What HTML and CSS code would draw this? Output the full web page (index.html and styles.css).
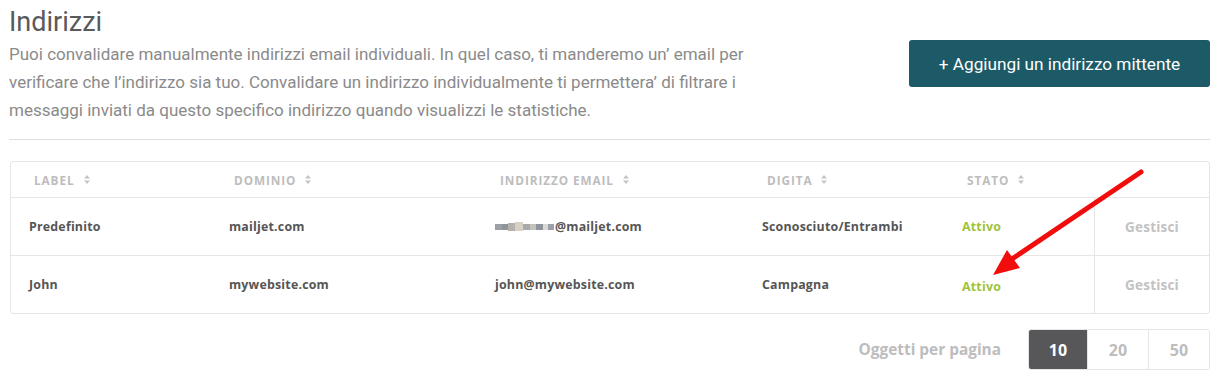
FILE: index.html
```html
<!DOCTYPE html>
<html lang="it">
<head>
<meta charset="utf-8">
<title>Indirizzi</title>
<link rel="stylesheet" href="styles.css">
</head>
<body>
<div class="page">
  <h1 class="title">Indirizzi</h1>
  <div class="intro">
    <p class="desc">Puoi convalidare manualmente indirizzi email individuali. In quel caso, ti manderemo un’ email per verificare che l’indirizzo sia tuo. Convalidare un indirizzo individualmente ti permettera’ di filtrare i messaggi inviati da questo specifico indirizzo quando visualizzi le statistiche.</p>
    <button class="add-btn">+ Aggiungi un indirizzo mittente</button>
  </div>
  <hr class="sep">
  <div class="table-wrap">
    <div class="table">
      <div class="row head">
        <div class="cell">LABEL <svg class="sort" viewBox="0 0 6 9"><path d="M3 0L6 3.5H0Z M3 9L0 5.5H6Z"/></svg></div>
        <div class="cell">DOMINIO <svg class="sort" viewBox="0 0 6 9"><path d="M3 0L6 3.5H0Z M3 9L0 5.5H6Z"/></svg></div>
        <div class="cell">INDIRIZZO EMAIL <svg class="sort" viewBox="0 0 6 9"><path d="M3 0L6 3.5H0Z M3 9L0 5.5H6Z"/></svg></div>
        <div class="cell">DIGITA <svg class="sort" viewBox="0 0 6 9"><path d="M3 0L6 3.5H0Z M3 9L0 5.5H6Z"/></svg></div>
        <div class="cell">STATO <svg class="sort" viewBox="0 0 6 9"><path d="M3 0L6 3.5H0Z M3 9L0 5.5H6Z"/></svg></div>
        <div class="cell"></div>
      </div>
      <div class="row">
        <div class="cell">Predefinito</div>
        <div class="cell">mailjet.com</div>
        <div class="cell"><span class="blur"><i class="b1"></i><i class="b2"></i><i class="b3"></i><i class="b4"></i><i class="b5"></i><i class="b6"></i><i class="b7"></i><i class="b8"></i><i class="b9"></i></span>@mailjet.com</div>
        <div class="cell">Sconosciuto/Entrambi</div>
        <div class="cell status">Attivo</div>
        <div class="cell action">Gestisci</div>
      </div>
      <div class="row">
        <div class="cell">John</div>
        <div class="cell">mywebsite.com</div>
        <div class="cell">john@mywebsite.com</div>
        <div class="cell">Campagna</div>
        <div class="cell status low">Attivo</div>
        <div class="cell action">Gestisci</div>
      </div>
    </div>
    <svg class="arrow" viewBox="0 0 170 120" width="170" height="120">
      <line x1="157" y1="10" x2="28" y2="97" stroke="#f20d0d" stroke-width="5" stroke-linecap="round"/>
      <path d="M9 113L23 88L36 106Z" fill="#f20d0d"/>
    </svg>
  </div>
  <div class="pager">
    <span class="pager-label">Oggetti per pagina</span>
    <div class="pager-group">
      <button class="pg active">10</button>
      <button class="pg">20</button>
      <button class="pg">50</button>
    </div>
  </div>
</div>
</body>
</html>
```
FILE: styles.css
```css
* { box-sizing: border-box; }
body {
  margin: 0;
  background: #fff;
  font-family: Roboto, "Liberation Sans", sans-serif;
}
.page {
  width: 1201px;
  margin-left: 9px;
  padding-top: 6px;
}
.title {
  margin: 0;
  font-family: Roboto, sans-serif;
  font-weight: 400;
  font-size: 27px;
  line-height: 32px;
  color: #5a5a5a;
}
.intro {
  display: flex;
  justify-content: space-between;
  align-items: flex-start;
}
.desc {
  margin: 2px 0 0 0;
  width: 765px;
  font-size: 17px;
  line-height: 28px;
  color: #8a8a8a;
}
.add-btn {
  margin-top: 2px;
  width: 301px;
  height: 47px;
  background: #1c5a67;
  border: none;
  border-radius: 3px;
  color: #fff;
  font-family: Roboto, sans-serif;
  font-size: 17.2px;
  padding: 0;
}
.sep {
  margin: 15px 0 0 0;
  border: none;
  border-top: 1px solid #dedede;
}
.table-wrap {
  position: relative;
  margin-top: 21px;
  margin-left: 1px;
}
.table {
  border: 1px solid #e6e6e6;
  border-radius: 3px;
  font-family: "Open Sans", sans-serif;
  font-weight: 700;
}
.row {
  display: grid;
  grid-template-columns: 200px 266px 267px 200px 150px 1fr;
  height: 58px;
  border-top: 1px solid #e6e6e6;
  align-items: stretch;
}
.row.head {
  height: 35px;
  border-top: none;
}
.cell {
  display: flex;
  align-items: center;
  padding-left: 18px;
  font-size: 12.4px;
  color: #555;
  letter-spacing: 0.2px;
}
.head .cell {
  padding-left: 23px;
  font-size: 11.8px;
  color: #bdbdbd;
  letter-spacing: 0.9px;
}
.sort {
  width: 6px;
  height: 9px;
  margin-left: 9px;
  fill: #c4c4c4;
}
.status { color: #9ec33b; }
.status.low { padding-top: 4px; }
.action {
  justify-content: center;
  padding-left: 0;
  font-size: 13.5px;
  color: #c2c2c2;
  border-left: 1px solid #e6e6e6;
}
.blur {
  display: inline-flex;
  align-items: center;
  margin-right: 1px;
}
.blur i {
  display: inline-block;
  width: 7px;
  height: 6px;
}
.blur .b1 { background: #9aa0a6; }
.blur .b2 { background: #8e949b; width: 6px; }
.blur .b3 { background: #b6b1aa; height: 8px; }
.blur .b4 { background: #d8d0c4; height: 9px; width: 8px; }
.blur .b5 { background: #a7a9ad; }
.blur .b6 { background: #c5c1bb; width: 6px; }
.blur .b7 { background: #8f959c; }
.blur .b8 { background: #d9d9d9; width: 5px; }
.blur .b9 { background: #9ba1a7; width: 6px; }
.arrow {
  position: absolute;
  left: 974px;
  top: 1px;
}
.pager {
  display: flex;
  justify-content: flex-end;
  align-items: center;
  gap: 27px;
  margin-top: 15px;
}
.pager-label {
  font-family: "Open Sans", sans-serif;
  font-weight: 700;
  font-size: 15.4px;
  color: #bdbdbd;
}
.pager-group {
  display: flex;
  border: 1px solid #e6e6e6;
  border-radius: 3px;
  overflow: hidden;
}
.pg {
  width: 61px;
  height: 39px;
  border: none;
  border-left: 1px solid #e6e6e6;
  background: #fff;
  color: #bdbdbd;
  font-family: "Open Sans", sans-serif;
  font-weight: 700;
  font-size: 16px;
  padding: 0;
}
.pg:first-child { border-left: none; width: 58px; }
.pg.active { background: #57575a; color: #fff; }
```
